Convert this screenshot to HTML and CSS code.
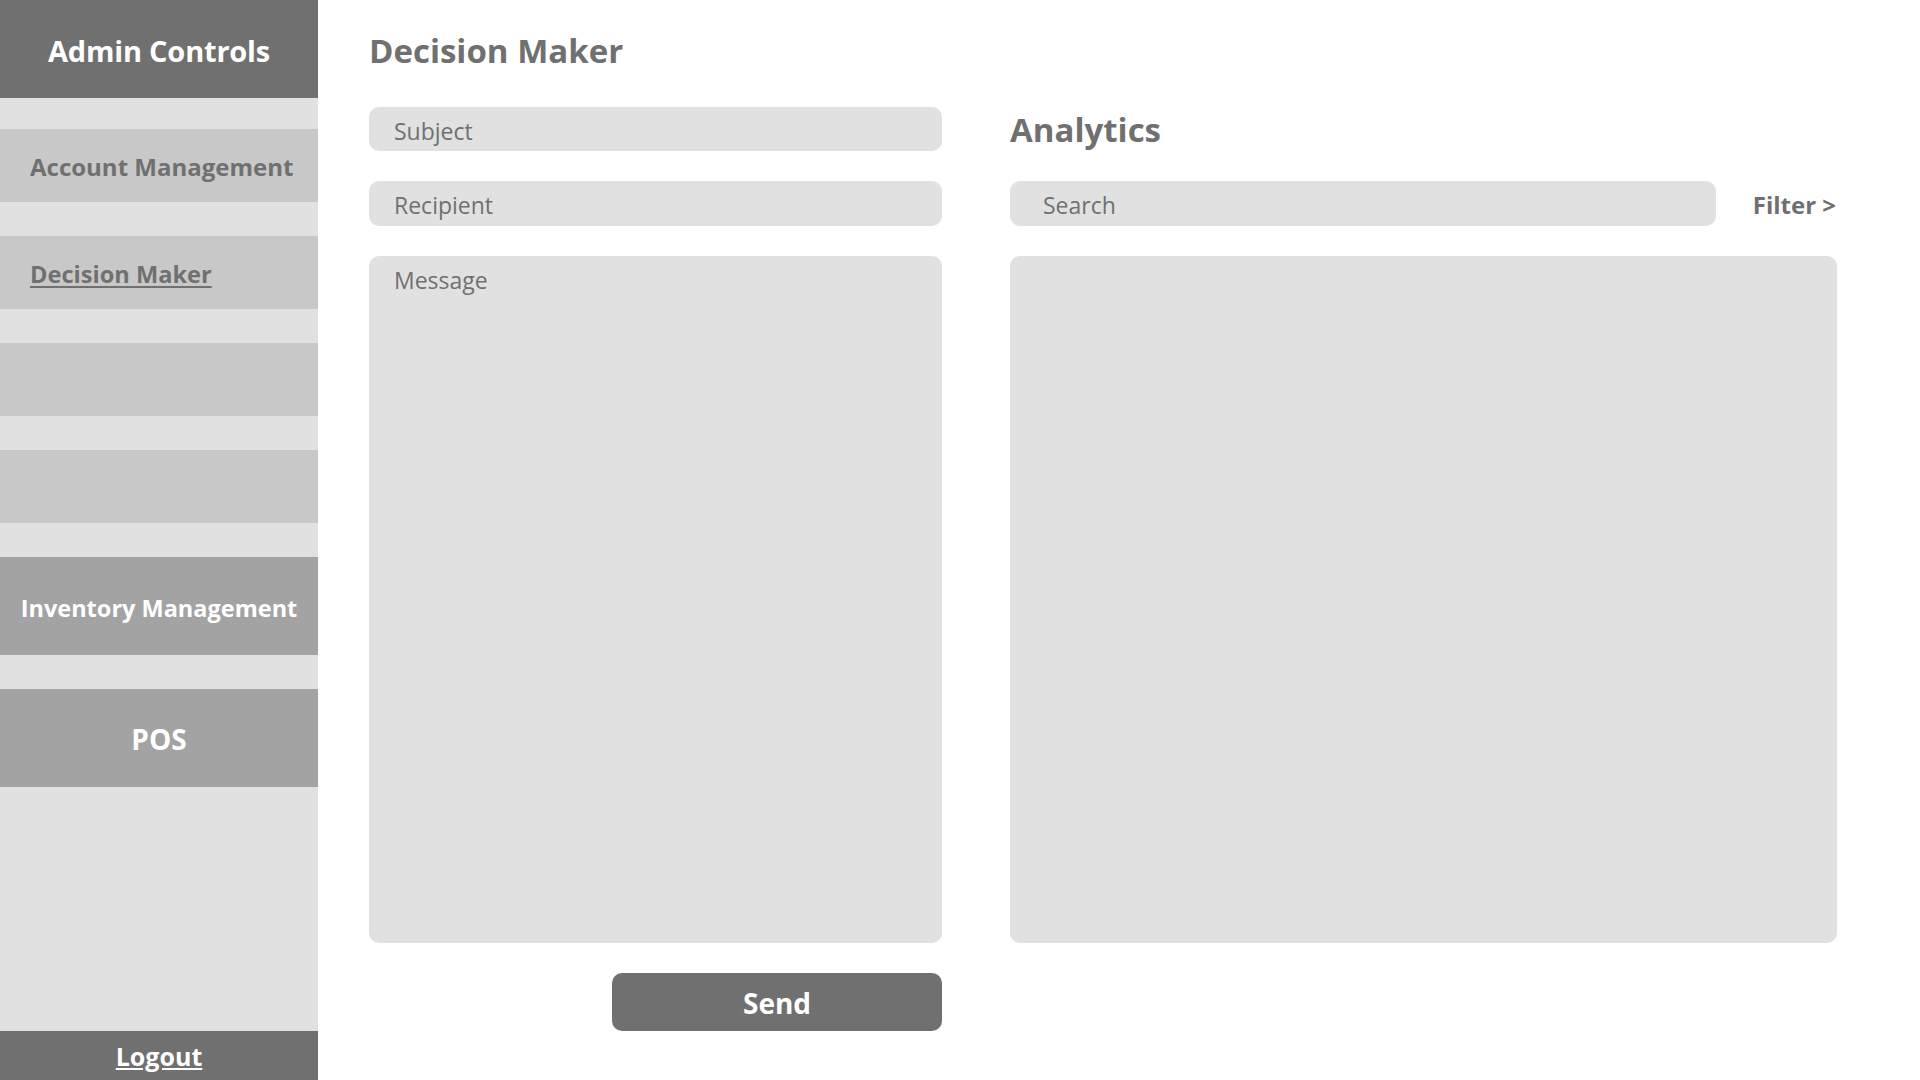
FILE: index.html
```html
<!DOCTYPE html>
<html lang="en">
<head>
<meta charset="utf-8">
<title>Decision Maker</title>
<link rel="stylesheet" href="styles.css">
</head>
<body>
<aside class="sidebar">
  <div class="brand">Admin Controls</div>
  <nav class="menu">
    <a class="item item-light">Account Management</a>
    <a class="item item-light item-active">Decision Maker</a>
    <a class="item item-light"></a>
    <a class="item item-light"></a>
    <a class="item item-dark">Inventory Management</a>
    <a class="item item-dark item-pos">POS</a>
  </nav>
  <div class="logout"><a class="logout-link">Logout</a></div>
</aside>
<main class="main">
  <div class="grid">
    <h1 class="title">Decision Maker</h1>
    <div class="spacer"></div>

    <input class="field" type="text" placeholder="Subject">
    <h2 class="subtitle">Analytics</h2>

    <input class="field" type="text" placeholder="Recipient">
    <div class="search-row">
      <input class="field search" type="text" placeholder="Search">
      <a class="filter">Filter &gt;</a>
    </div>

    <textarea class="field message" placeholder="Message"></textarea>
    <div class="panel"></div>

    <div class="send-row"><button class="send">Send</button></div>
    <div></div>
  </div>
</main>
</body>
</html>
```

FILE: styles.css
```css
* { box-sizing: border-box; }

html, body {
  margin: 0;
  padding: 0;
  height: 1080px;
}

body {
  display: flex;
  font-family: "Open Sans", "Noto Sans", sans-serif;
  color: #707070;
  background: #ffffff;
  overflow: hidden;
}

/* Sidebar */
.sidebar {
  width: 318px;
  flex: 0 0 318px;
  height: 1080px;
  background: #e1e1e1;
  display: flex;
  flex-direction: column;
}

.brand {
  height: 98px;
  background: #707070;
  color: #ffffff;
  font-weight: 700;
  font-size: 29px;
  letter-spacing: -0.2px;
  display: flex;
  align-items: center;
  justify-content: center;
  padding-top: 2px;
}

.menu {
  display: flex;
  flex-direction: column;
  gap: 34px;
  padding-top: 31px;
  flex: 1;
}

.item {
  display: flex;
  align-items: center;
  font-weight: 700;
  font-size: 24px;
  padding-top: 2px;
}

.item-light {
  height: 73px;
  background: #c8c8c8;
  color: #707070;
  padding-left: 30px;
}

.item-active {
  font-size: 23.6px;
  text-decoration: underline;
  text-underline-offset: 3px;
}

.item-dark {
  height: 98px;
  background: #a3a3a3;
  color: #ffffff;
  justify-content: center;
  font-size: 23.5px;
  padding-top: 3px;
}

.item-pos {
  font-size: 28px;
  padding-top: 2px;
}

.logout {
  height: 49px;
  background: #707070;
  display: flex;
  align-items: center;
  justify-content: center;
}

.logout-link {
  color: #ffffff;
  font-weight: 700;
  font-size: 25px;
  text-decoration: underline;
  text-underline-offset: 2px;
}

/* Main */
.main {
  flex: 1;
  padding-left: 51px;
}

.grid {
  display: grid;
  grid-template-columns: 573px 827px;
  grid-template-rows: 77px 44px 45px 687px 58px;
  column-gap: 68px;
  row-gap: 30px;
}

.title {
  margin: 31px 0 0 0;
  font-size: 33px;
  font-weight: 700;
  line-height: 1.2;
}

.subtitle {
  margin: 2px 0 0 0;
  font-size: 33px;
  font-weight: 700;
  line-height: 1.2;
  align-self: center;
}

.field {
  display: block;
  width: 100%;
  height: 100%;
  border: none;
  outline: none;
  background: #e1e1e1;
  border-radius: 10px;
  padding: 3px 0 0 25px;
  font-family: "Open Sans", "Noto Sans", sans-serif;
  font-size: 23px;
  color: #707070;
}

.field::placeholder {
  color: #707070;
  opacity: 1;
}

.message {
  height: 687px;
  resize: none;
  padding-top: 8px;
}

.search-row {
  display: flex;
  align-items: center;
  justify-content: space-between;
}

.search {
  width: 706px;
  height: 45px;
  padding-left: 33px;
}

.filter {
  font-weight: 700;
  font-size: 24px;
  color: #707070;
  margin-right: 1px;
  padding-top: 2px;
}

.panel {
  background: #e1e1e1;
  border-radius: 10px;
}

.send-row {
  display: flex;
  justify-content: flex-end;
}

.send {
  width: 330px;
  height: 58px;
  border: none;
  border-radius: 10px;
  background: #707070;
  color: #ffffff;
  font-family: "Open Sans", "Noto Sans", sans-serif;
  font-weight: 700;
  font-size: 28px;
  padding: 2px 0 0 0;
}
```
